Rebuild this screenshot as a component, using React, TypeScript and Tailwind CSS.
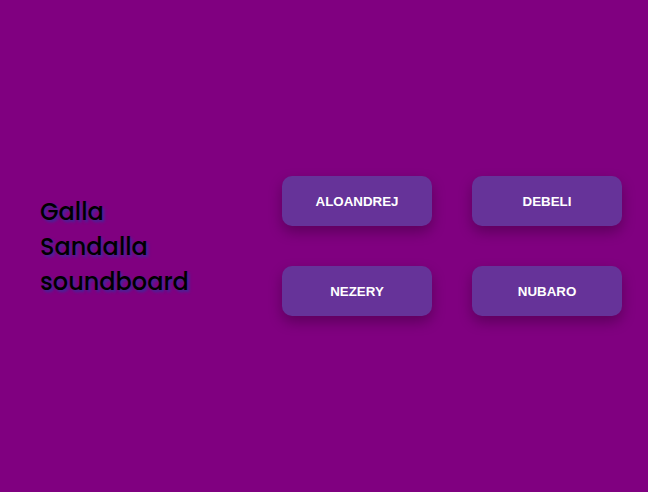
const SOUNDS = ["Aloandrej", "Debeli", "Nezery", "Nubaro"];

export default function App() {
  return (
    <div className="flex h-[492px] w-full items-center bg-[#800080] pl-[40px]">
      {/* title */}
      <h1 className="w-[242px] font-['Poppins','Inter',sans-serif] text-[24px] leading-[35px] font-medium text-black [text-shadow:2px_2px_3px_#3c2a9c]">
        Galla
        <br />
        Sandalla
        <br />
        soundboard
      </h1>

      {/* buttons */}
      <div className="grid grid-cols-2 gap-[40px]">
        {SOUNDS.map((s) => (
          <button
            key={s}
            className="flex h-[50px] w-[150px] items-center justify-center rounded-[10px] bg-[#663399] pt-[2px] font-['Liberation_Sans',Arial,sans-serif] text-[13.333px] font-bold uppercase text-white shadow-[0_6px_14px_rgba(0,0,0,0.28)]"
          >
            {s}
          </button>
        ))}
      </div>
    </div>
  );
}
